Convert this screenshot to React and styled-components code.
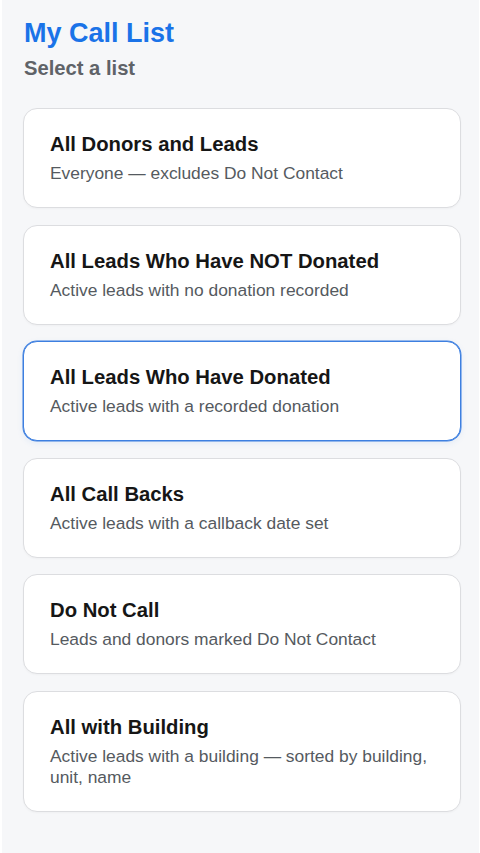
import React from "react";
import styled, { createGlobalStyle } from "styled-components";

const Global = createGlobalStyle`
  html, body { margin: 0; padding: 0; background: #ffffff; }
  body { font-family: "Liberation Sans", Arial, sans-serif; }
  * { box-sizing: border-box; }
`;

const Page = styled.div`
  min-height: 853px;
  margin: 0 1px 0 2px;
  background: #f6f7f9;
  padding: 17px 18px 24px 21px;
`;

const Title = styled.h1`
  margin: 0;
  font-size: 27px;
  line-height: 32px;
  font-weight: 700;
  color: #1a73e8;
  padding-left: 1px;
`;

const Subtitle = styled.h2`
  margin: 7px 0 0;
  font-size: 20.2px;
  line-height: 24px;
  font-weight: 700;
  color: #5f6368;
  padding-left: 1px;
`;

const List = styled.div`
  margin-top: 28px;
  display: flex;
  flex-direction: column;
  gap: 16.5px;
`;

const Card = styled.button`
  display: flex;
  flex-direction: column;
  align-items: flex-start;
  text-align: left;
  width: 438px;
  background: #ffffff;
  border: 1px solid ${(p) => (p.$active ? "#3d7fe0" : "#dcdde0")};
  box-shadow: ${(p) =>
    p.$active ? "0 0 0 0.5px #3d7fe0, 0 2px 6px rgba(61,127,224,0.10)" : "0 1px 2px rgba(0,0,0,0.03)"};
  border-radius: 14px;
  padding: 23px 26px 22.5px 26px;
  font-family: inherit;
  cursor: pointer;
`;

const CardTitle = styled.div`
  font-size: 20.3px;
  line-height: 24px;
  font-weight: 700;
  color: #161616;
`;

const CardDesc = styled.div`
  margin-top: 7px;
  font-size: 17.4px;
  line-height: 21.5px;
  color: #555a60;
`;

const lists = [
  { title: "All Donors and Leads", desc: "Everyone — excludes Do Not Contact" },
  { title: "All Leads Who Have NOT Donated", desc: "Active leads with no donation recorded" },
  { title: "All Leads Who Have Donated", desc: "Active leads with a recorded donation", active: true },
  { title: "All Call Backs", desc: "Active leads with a callback date set" },
  { title: "Do Not Call", desc: "Leads and donors marked Do Not Contact" },
  { title: "All with Building", desc: "Active leads with a building — sorted by building, unit, name" },
];

export default function App() {
  return (
    <>
      <Global />
      <Page>
        <Title>My Call List</Title>
        <Subtitle>Select a list</Subtitle>
        <List>
          {lists.map((l) => (
            <Card key={l.title} $active={l.active}>
              <CardTitle>{l.title}</CardTitle>
              <CardDesc>{l.desc}</CardDesc>
            </Card>
          ))}
        </List>
      </Page>
    </>
  );
}
